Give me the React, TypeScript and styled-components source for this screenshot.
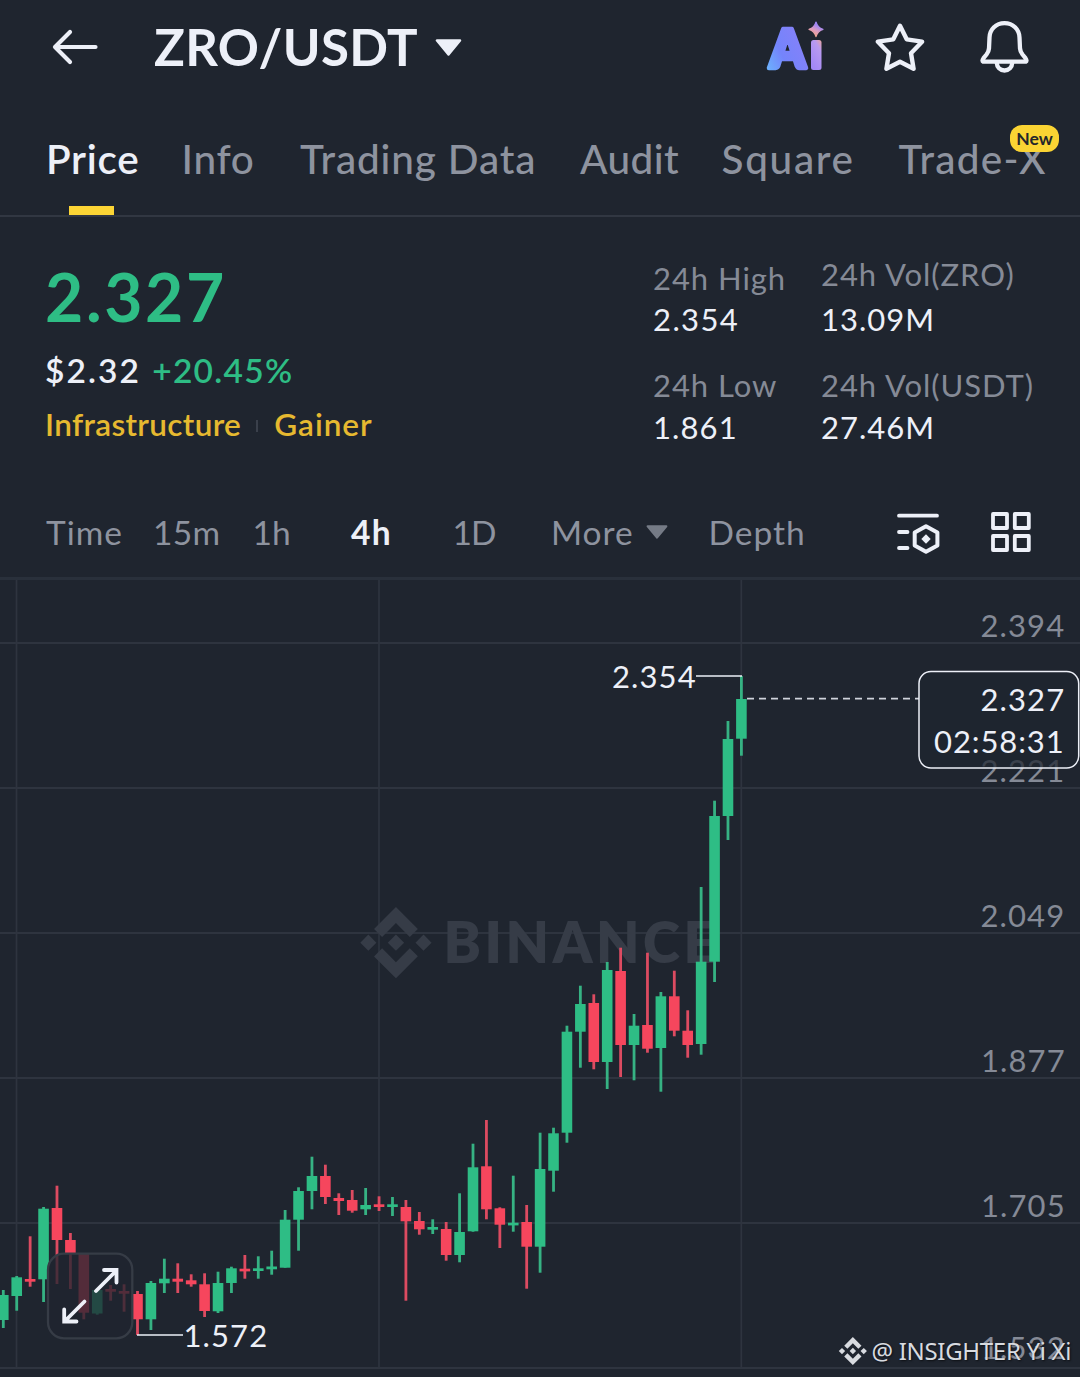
import React from "react";
import styled, { createGlobalStyle } from "styled-components";

const color = {
  bg: "#1f252f",
  text: "#edf0f8",
  muted: "#8e939f",
  line: "#2e343f",
  green: "#2ebd85",
  red: "#f6465d",
  yellow: "#fcd535",
  tag: "#e6b930",
};

const GlobalStyle = createGlobalStyle`
  * { box-sizing: border-box; }
  html, body { margin: 0; background: ${color.bg}; }
  body { font-family: Lato, "Liberation Sans", sans-serif; color: ${color.text}; }
  svg { display: block; }
`;

const Screen = styled.div`
  width: 1080px;
  height: 1377px;
  overflow: hidden;
  display: flex;
  flex-direction: column;
  background: ${color.bg};
`;

/* ---------- header ---------- */

const Header = styled.header`
  height: 93px;
  flex: none;
  display: flex;
  align-items: center;
  padding: 1px 49px 0 51px;
`;

const Pair = styled.h1`
  margin: 0 17px 0 55px;
  font-size: 51px;
  line-height: 60px;
  font-weight: 700;
  letter-spacing: 0.35px;
`;

const HeaderActions = styled.div`
  margin-left: auto;
  display: flex;
  align-items: center;
  gap: 52px;
`;

/* ---------- tabs ---------- */

const Tabs = styled.nav`
  height: 124px;
  flex: none;
  display: grid;
  grid-template-columns: 135.5px 118.5px 280px 141.5px 177px 160px;
  padding-left: 46px;
  border-bottom: 2px solid #313742;
`;

const Tab = styled.div<{ $active?: boolean }>`
  position: relative;
  display: flex;
  flex-direction: column;
  align-items: flex-start;
  padding-top: 42px;
  font-size: 40.5px;
  line-height: 48px;
  font-weight: ${(p) => (p.$active ? 600 : 500)};
  color: ${(p) => (p.$active ? color.text : color.muted)};
  white-space: nowrap;
`;

const TabLabel = styled.span<{ $track: number }>`
  letter-spacing: ${(p) => p.$track}px;
`;

const Underline = styled.span`
  width: 45px;
  height: 9px;
  margin: auto 0 0 23px;
  background: ${color.yellow};
`;

const NewBadge = styled.span`
  position: absolute;
  left: 111.5px;
  top: 32px;
  width: 49px;
  height: 27px;
  border-radius: 12px;
  background: #fad433;
  color: #23262b;
  font-size: 17.5px;
  line-height: 27px;
  font-weight: 700;
  text-align: center;
`;

/* ---------- summary ---------- */

const Summary = styled.section`
  height: 270px;
  flex: none;
  display: grid;
  grid-template-columns: 608px 168px 1fr;
  padding-left: 45px;
  white-space: nowrap;
`;

const PriceColumn = styled.div`
  padding-top: 41px;
`;

const LastPrice = styled.div`
  font-size: 66px;
  line-height: 78px;
  font-weight: 700;
  letter-spacing: 2.6px;
  color: ${color.green};
`;

const ChangeRow = styled.div`
  display: flex;
  gap: 11px;
  margin-top: 14px;
  font-size: 33.5px;
  line-height: 40px;
  font-weight: 600;
  letter-spacing: 2.1px;
`;

const Change = styled.span`
  font-weight: 600;
  letter-spacing: 1.3px;
  color: ${color.green};
`;

const TagRow = styled.div`
  display: flex;
  align-items: center;
  margin-top: 14.5px;
  font-size: 31.5px;
  line-height: 38px;
  font-weight: 600;
  color: ${color.tag};
`;

const Tag = styled.span<{ $track: number }>`
  letter-spacing: ${(p) => p.$track}px;
`;

const TagDivider = styled.span`
  width: 2px;
  height: 12px;
  margin: 4px 16px 0 15px;
  background: #3a404b;
`;

const StatColumn = styled.div<{ $top: number; $inner: number }>`
  display: flex;
  flex-direction: column;
  padding-top: ${(p) => p.$top}px;
  & > :first-child dd { margin-top: ${(p) => p.$inner}px; }
`;

const Stat = styled.dl`
  margin: 0 0 26px;
  font-size: 31px;
  line-height: 40px;
`;

const StatLabel = styled.dt`
  color: #858a96;
  letter-spacing: 0.95px;
`;

const StatValue = styled.dd<{ $track: number }>`
  margin: 1.5px 0 0;
  letter-spacing: ${(p) => p.$track}px;
`;

/* ---------- interval bar ---------- */

const Intervals = styled.nav`
  height: 93px;
  flex: none;
  display: grid;
  grid-template-columns: 107px 99.5px 98.5px 101.6px 98.4px 157.5px 187.5px 94px 60px;
  align-items: center;
  padding-left: 46px;
  border-bottom: 3px solid #29303b;
`;

const Interval = styled.div<{ $active?: boolean; $track: number }>`
  display: flex;
  align-items: center;
  gap: 12px;
  padding-top: 0.5px;
  font-size: 33.5px;
  line-height: 40px;
  font-weight: ${(p) => (p.$active ? 700 : 400)};
  color: ${(p) => (p.$active ? color.text : color.muted)};
  letter-spacing: ${(p) => p.$track}px;
  white-space: nowrap;
`;

/* ---------- chart ---------- */

const ChartArea = styled.main`
  flex: 1;
  min-height: 0;
`;

const ChartSvg = styled.svg`
  font-family: Lato, "Liberation Sans", sans-serif;
  font-size: 31px;
`;

const AxisText = styled.text`
  fill: #858a96;
  letter-spacing: 1.1px;
`;

const ValueText = styled.text<{ $track?: number }>`
  fill: ${color.text};
  letter-spacing: ${(p) => p.$track ?? 1.1}px;
`;

const BrandText = styled.text`
  fill: #363c47;
  font-size: 56px;
  font-weight: 800;
`;

const CreditText = styled.text`
  fill: #d8dbe0;
  font-family: "Noto Sans", sans-serif;
  font-size: 24px;
  text-shadow: 1px 1px 2px rgba(0, 0, 0, 0.6);
`;

type Candle = [up: 0 | 1, high: number, top: number, bottom: number, low: number];

const candles: Candle[] = [
  [1, 1290, 1295, 1320, 1328],
  [1, 1276, 1277.3, 1296, 1310.7],
  [0, 1236.3, 1279, 1281.7, 1286.7],
  [1, 1207, 1208.7, 1279.3, 1302],
  [0, 1185.7, 1208, 1240, 1284],
  [0, 1233, 1240, 1253, 1289],
  [0, 1253, 1253, 1312.7, 1319.3],
  [1, 1288, 1290, 1313.5, 1314.7],
  [0, 1285, 1289, 1291.7, 1300.7],
  [0, 1284.3, 1291, 1293.7, 1311.7],
  [0, 1291, 1294, 1319.3, 1335],
  [1, 1281, 1283, 1319.3, 1330],
  [1, 1258.7, 1278.7, 1283.3, 1293],
  [0, 1263.3, 1278.7, 1281.7, 1293],
  [0, 1274.3, 1280.3, 1284.3, 1286.7],
  [0, 1273.3, 1284.3, 1311, 1317],
  [1, 1271.7, 1283, 1311.3, 1313],
  [1, 1266.7, 1268.3, 1283, 1293],
  [0, 1255, 1268.7, 1271.3, 1278.7],
  [1, 1256.3, 1268.3, 1271, 1278.7],
  [1, 1250.7, 1266.5, 1269.3, 1274.7],
  [1, 1210, 1219.7, 1267.7, 1267.7],
  [1, 1187.3, 1191, 1219.7, 1250.7],
  [1, 1156.7, 1176, 1191, 1209.3],
  [0, 1164.7, 1176, 1197, 1204],
  [0, 1193.3, 1198, 1201, 1215],
  [0, 1190, 1200, 1210.7, 1212.7],
  [1, 1188, 1205, 1209.3, 1215],
  [0, 1196.3, 1204.3, 1207, 1211],
  [1, 1197, 1204.3, 1206.7, 1216],
  [0, 1200, 1207, 1221.3, 1300.7],
  [0, 1212, 1221, 1229.3, 1234.7],
  [1, 1219.3, 1227, 1229.3, 1234],
  [0, 1222, 1229, 1255, 1260.7],
  [1, 1193.3, 1232, 1255, 1262.3],
  [1, 1143.7, 1167.3, 1231.3, 1231.7],
  [0, 1120, 1166.3, 1209.3, 1219.3],
  [0, 1207.3, 1208.3, 1224.7, 1248],
  [1, 1175.7, 1222.7, 1225, 1231.7],
  [0, 1205, 1222, 1246.7, 1288.7],
  [1, 1132.7, 1169, 1246.7, 1272.7],
  [1, 1127.7, 1133.3, 1170.7, 1191.7],
  [1, 1025.7, 1031.7, 1132.7, 1142.7],
  [1, 985.7, 1004, 1031.7, 1067.7],
  [0, 994.3, 1003, 1062, 1069.3],
  [1, 962, 970, 1062, 1089],
  [0, 947.7, 971, 1045, 1077],
  [1, 1014, 1025.7, 1045, 1080.3],
  [0, 952.7, 1025, 1048.7, 1052.7],
  [1, 992, 996.3, 1048, 1091.7],
  [0, 970.7, 996.3, 1030.7, 1036.3],
  [0, 1010.3, 1030.7, 1045, 1057.7],
  [1, 887, 961.7, 1044, 1054.7],
  [1, 800.7, 816, 961.7, 982],
  [1, 721, 739, 816, 840],
  [1, 676, 699, 738.7, 755.7],
];

const candleX = (i: number) => 3.3 + i * 13.42;

const axis: [string, number, number][] = [
  ["2.394", 980.5, 637],
  ["2.221", 980.5, 782],
  ["2.049", 980.5, 927],
  ["1.877", 981, 1072],
  ["1.705", 981, 1217],
  ["1.532", 981, 1359],
];

const BinanceMark = ({ x, y, scale, fill }: { x: number; y: number; scale: number; fill: string }) => (
  <g transform={`translate(${x} ${y}) scale(${scale})`} fill={fill}>
    <path d="M38.73 53.2l24.59-24.58 24.6 24.6 14.3-14.31L63.32 0l-38.9 38.9z" />
    <path d="M0 63.31L14.3 49l14.31 14.31-14.31 14.3z" />
    <path d="M38.73 73.41L63.32 98l24.6-24.6 14.31 14.29-38.9 38.91-38.91-38.88z" />
    <path d="M98 63.31L112.3 49l14.31 14.3-14.31 14.32z" />
    <path d="M77.83 63.3L63.32 48.78 48.81 63.28l14.51 14.5z" />
  </g>
);

const BackIcon = () => (
  <svg width="48" height="38" viewBox="0 0 48 38" fill="none" stroke={color.text} strokeWidth="4.2" strokeLinecap="round" strokeLinejoin="round">
    <path d="M19 4L4 19l15 15M4 19h40.5" />
  </svg>
);

const CaretIcon = ({ width, height, fill }: { width: number; height: number; fill: string }) => (
  <svg width={width} height={height} viewBox="0 0 27 17">
    <path d="M2 1.5h23L13.5 15.5z" fill={fill} stroke={fill} strokeWidth="2.5" strokeLinejoin="round" />
  </svg>
);

const AiIcon = () => (
  <svg width="56" height="54" viewBox="0 0 56 54" fontFamily="Lato, sans-serif" overflow="visible">
    <defs>
      <linearGradient id="ai-a" x1="0" y1="1" x2="1" y2="0.2">
        <stop offset="0.05" stopColor="#6cb2fd" />
        <stop offset="0.4" stopColor="#7484fb" />
        <stop offset="1" stopColor="#8a80f8" />
      </linearGradient>
      <linearGradient id="ai-i" x1="1" y1="0" x2="0.4" y2="1">
        <stop offset="0" stopColor="#eaa49c" />
        <stop offset="0.3" stopColor="#b99af0" />
        <stop offset="1" stopColor="#a288f6" />
      </linearGradient>
      <linearGradient id="ai-s" x1="0.2" y1="1" x2="0.7" y2="0">
        <stop offset="0.1" stopColor="#f2a58b" />
        <stop offset="0.45" stopColor="#dd9cc0" />
        <stop offset="0.8" stopColor="#9d86f6" />
      </linearGradient>
    </defs>
    <text x="2.5" y="48" fontSize="53" fontWeight="800" textLength="36" lengthAdjust="spacingAndGlyphs" fill="url(#ai-a)" stroke="url(#ai-a)" strokeWidth="4.4" strokeLinejoin="round">A</text>
    <rect x="44" y="20" width="10.5" height="30" rx="2.5" fill="url(#ai-i)" />
    <path d="M49 2q1.6 5.8 7 7.3q-5.4 1.5-7 7.3q-1.6-5.8-7-7.3q5.4-1.5 7-7.3z" fill="url(#ai-s)" stroke="url(#ai-s)" strokeWidth="1.2" strokeLinejoin="round" />
  </svg>
);

const StarIcon = () => (
  <svg width="52" height="54" viewBox="0 0 52 54" fill="none" stroke={color.text} strokeWidth="4.4" strokeLinejoin="round">
    <path d="M25 5.8L31.7 19.3L47.1 21.7L36 33.2L38.6 48.8L25 41.8L11.4 48.8L14 33.2L2.9 21.7L18.3 19.3Z" />
  </svg>
);

const BellIcon = () => (
  <svg width="52" height="54" viewBox="0 0 52 54" fill="none" stroke={color.text} strokeWidth="4.3" strokeLinejoin="round">
    <path d="M25.5 3.2C17 3.2 10.8 9.3 10.5 17.5L10 28.5C9.8 31 9 32.5 7.5 34.5L4.5 38.2C3.3 39.8 3.2 41.3 4.2 41.7H46.8C47.8 41.3 47.7 39.8 46.5 38.2L43.5 34.5C42 32.5 41.2 31 41 28.5L40.5 17.5C40.2 9.3 34 3.2 25.5 3.2Z" />
    <path d="M17.7 42.5C18 47.3 21 50.5 25.5 50.5S33 47.3 33.3 42.5" />
  </svg>
);

const IndicatorIcon = () => (
  <svg width="44" height="44" viewBox="0 0 44 44" fill="none" stroke={color.text} strokeWidth="3.8" strokeLinecap="round" strokeLinejoin="round">
    <path d="M3 5.7H41M3 22H11.5M3 38H11.5" />
    <path d="M30 16.2L41.4 22.5V35.5L30 41.8L18.7 35.5V22.5Z" strokeWidth="4" />
    <path d="M30 24.3L34.7 29L30 33.7L25.3 29Z" fill={color.text} stroke="none" />
  </svg>
);

const GridIcon = () => (
  <svg width="42" height="42" viewBox="0 0 42 42" fill="none" stroke={color.text} strokeWidth="3.8" strokeLinejoin="round">
    <rect x="3" y="3" width="14" height="14" />
    <rect x="24.8" y="3" width="14" height="14" />
    <rect x="3" y="25" width="14" height="14" />
    <rect x="24.8" y="25" width="14" height="14" />
  </svg>
);

const Chart = () => (
  <ChartSvg width="1080" height="797" viewBox="0 580 1080 797">
    <g stroke={color.line} strokeWidth="2">
      {[643, 788, 933, 1078, 1223, 1368].map((y) => (
        <line key={y} x1="0" x2="1080" y1={y} y2={y} />
      ))}
      {[16.5, 379, 741.3].map((x) => (
        <line key={x} x1={x} x2={x} y1="580" y2="1368" strokeWidth="1.7" />
      ))}
    </g>

    <BinanceMark x={360.3} y={907} scale={0.563} fill="#363c47" />
    <BrandText x="443.5" y="962.5" textLength="272" lengthAdjust="spacing">BINANCE</BrandText>

    {axis.map(([label, x, y]) => (
      <AxisText key={label} x={x} y={y}>{label}</AxisText>
    ))}

    {candles.map(([up, high, top, bottom, low], i) => (
      <g key={i}>
        <rect x={candleX(i) - 1.4} y={high} width="2.8" height={low - high} fill={up ? "#36b283" : "#dc4b61"} />
        <rect x={candleX(i) - 5.3} y={top} width="10.6" height={Math.max(bottom - top, 2.7)} fill={up ? color.green : color.red} />
      </g>
    ))}

    <path d="M696 676H742" stroke={color.text} strokeWidth="1.7" />
    <ValueText x="612" y="688">2.354</ValueText>
    <path d="M137 1335H183" stroke={color.text} strokeWidth="1.7" />
    <ValueText x="183.5" y="1347">1.572</ValueText>

    <path d="M747 698.7H919" stroke="#cfd3db" strokeWidth="1.7" strokeDasharray="7 5" />
    <rect x="919" y="671.5" width="159.7" height="96.5" rx="12" fill={color.bg} fillOpacity="0.72" stroke={color.text} strokeWidth="1.5" />
    <ValueText x="980.5" y="711">2.327</ValueText>
    <ValueText x="934" y="753" $track={0.9}>02:58:31</ValueText>

    <rect x="48" y="1253.7" width="84.3" height="84.6" rx="16" fill={color.bg} fillOpacity="0.76" stroke="#363c46" strokeWidth="2.3" />
    <g fill="none" stroke={color.text} strokeWidth="3.8" strokeLinecap="round" strokeLinejoin="miter">
      <path d="M96 1291L116 1271M104 1270H116.5V1282.5" />
      <path d="M84.5 1301.5L65 1321M64.2 1309.5V1321.5H76.5" />
    </g>

    <BinanceMark x={838.8} y={1337} scale={0.222} fill="#d8dbe0" />
    <CreditText x="871.5" y="1359.5" textLength="200" lengthAdjust="spacing">@ INSIGHTER Yi Xi</CreditText>
  </ChartSvg>
);

export default function App() {
  return (
    <>
      <GlobalStyle />
      <Screen>
        <Header>
          <BackIcon />
          <Pair>ZRO/USDT</Pair>
          <CaretIcon width={27} height={17} fill={color.text} />
          <HeaderActions>
            <AiIcon />
            <StarIcon />
            <BellIcon />
          </HeaderActions>
        </Header>

        <Tabs>
          <Tab $active>
            <TabLabel $track={0.7}>Price</TabLabel>
            <Underline />
          </Tab>
          <Tab><TabLabel $track={0.7}>Info</TabLabel></Tab>
          <Tab><TabLabel $track={0.85}>Trading Data</TabLabel></Tab>
          <Tab><TabLabel $track={0.4}>Audit</TabLabel></Tab>
          <Tab><TabLabel $track={1.7}>Square</TabLabel></Tab>
          <Tab>
            <TabLabel $track={1.3}>Trade-X</TabLabel>
            <NewBadge>New</NewBadge>
          </Tab>
        </Tabs>

        <Summary>
          <PriceColumn>
            <LastPrice>2.327</LastPrice>
            <ChangeRow>
              <span>$2.32</span>
              <Change>+20.45%</Change>
            </ChangeRow>
            <TagRow>
              <Tag $track={0.35}>Infrastructure</Tag>
              <TagDivider />
              <Tag $track={1}>Gainer</Tag>
            </TagRow>
          </PriceColumn>
          <StatColumn $top={40.5} $inner={1.5}>
            <Stat>
              <StatLabel>24h High</StatLabel>
              <StatValue $track={1.4}>2.354</StatValue>
            </Stat>
            <Stat>
              <StatLabel>24h Low</StatLabel>
              <StatValue $track={1.1}>1.861</StatValue>
            </Stat>
          </StatColumn>
          <StatColumn $top={36.5} $inner={5.5}>
            <Stat>
              <StatLabel>24h Vol(ZRO)</StatLabel>
              <StatValue $track={1}>13.09M</StatValue>
            </Stat>
            <Stat>
              <StatLabel>24h Vol(USDT)</StatLabel>
              <StatValue $track={1}>27.46M</StatValue>
            </Stat>
          </StatColumn>
        </Summary>

        <Intervals>
          <Interval $track={1}>Time</Interval>
          <Interval $track={0.3}>15m</Interval>
          <Interval $track={0}>1h</Interval>
          <Interval $track={1.4} $active>4h</Interval>
          <Interval $track={-1}>1D</Interval>
          <Interval $track={1}>
            More
            <CaretIcon width={22} height={14} fill="#757b86" />
          </Interval>
          <Interval $track={1}>Depth</Interval>
          <IndicatorIcon />
          <GridIcon />
        </Intervals>

        <ChartArea>
          <Chart />
        </ChartArea>
      </Screen>
    </>
  );
}
